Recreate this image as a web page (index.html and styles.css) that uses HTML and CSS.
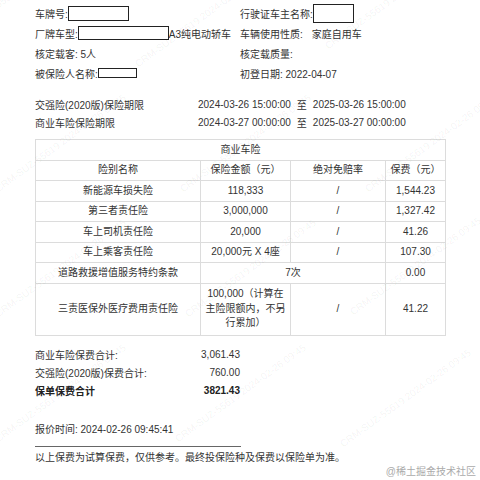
FILE: index.html
```html
<!DOCTYPE html>
<html lang="zh">
<head>
<meta charset="utf-8">
<link rel="stylesheet" href="styles.css">
</head>
<body>
<div class="page">
  <div class="info">
    <div class="cell">车牌号:<span class="mask m1"></span></div>
    <div class="cell">行驶证车主名称:<span class="mask m4"></span></div>
    <div class="cell">厂牌车型:<span class="mask m2"></span>A3纯电动轿车</div>
    <div class="cell">车辆使用性质:<span class="val">家庭自用车</span></div>
    <div class="cell">核定载客: 5人</div>
    <div class="cell">核定载质量:</div>
    <div class="cell">被保险人名称:<span class="mask m3"></span></div>
    <div class="cell">初登日期: 2022-04-07</div>
  </div>

  <div class="periods">
    <div class="period"><span class="plabel">交强险(2020版)保险期限</span><span>2024-03-26 15:00:00</span><span class="to">至</span><span>2025-03-26 15:00:00</span></div>
    <div class="period"><span class="plabel">商业车险保险期限</span><span>2024-03-27 00:00:00</span><span class="to">至</span><span>2025-03-27 00:00:00</span></div>
  </div>

  <table class="cover">
    <colgroup><col class="c1"><col class="c2"><col class="c3"><col class="c4"></colgroup>
    <tr><td colspan="4">商业车险</td></tr>
    <tr><td>险别名称</td><td>保险金额（元）</td><td>绝对免赔率</td><td>保费（元）</td></tr>
    <tr><td>新能源车损失险</td><td>118,333</td><td>/</td><td>1,544.23</td></tr>
    <tr><td>第三者责任险</td><td>3,000,000</td><td>/</td><td>1,327.42</td></tr>
    <tr><td>车上司机责任险</td><td>20,000</td><td>/</td><td>41.26</td></tr>
    <tr><td>车上乘客责任险</td><td>20,000元 X 4座</td><td>/</td><td>107.30</td></tr>
    <tr><td>道路救援增值服务特约条款</td><td colspan="2">7次</td><td>0.00</td></tr>
    <tr class="tall"><td>三责医保外医疗费用责任险</td><td class="multi">100,000（计算在<br>主险限额内，不另<br>行累加）</td><td>/</td><td>41.22</td></tr>
  </table>

  <div class="totals">
    <div class="trow"><span>商业车险保费合计:</span><span>3,061.43</span></div>
    <div class="trow"><span>交强险(2020版)保费合计:</span><span>760.00</span></div>
    <div class="trow bold"><span>保单保费合计</span><span>3821.43</span></div>
  </div>

  <div class="quote">报价时间: 2024-02-26 09:45:41</div>
  <div class="rule"></div>
  <div class="note">以上保费为试算保费，仅供参考。最终投保险种及保费以保险单为准。</div>
  <div class="brand">@稀土掘金技术社区</div>
</div>

<div class="wm">
  <span class="w" style="left:-40px;top:28px">CRM-SUZ-55619 2024-02-26 09:45</span>
  <span class="w" style="left:140px;top:58px">CRM-SUZ-55619 2024-02-26 09:45</span>
  <span class="w" style="left:330px;top:40px">CRM-SUZ-55619 2024-02-26 09:45</span>
  <span class="w" style="left:0px;top:183px">CRM-SUZ-55619 2024-02-26 09:45</span>
  <span class="w" style="left:185px;top:183px">CRM-SUZ-55619 2024-02-26 09:45</span>
  <span class="w" style="left:370px;top:183px">CRM-SUZ-55619 2024-02-26 09:45</span>
  <span class="w" style="left:0px;top:308px">CRM-SUZ-55619 2024-02-26 09:45</span>
  <span class="w" style="left:190px;top:308px">CRM-SUZ-55619 2024-02-26 09:45</span>
  <span class="w" style="left:355px;top:306px">CRM-SUZ-55619 2024-02-26 09:45</span>
  <span class="w" style="left:0px;top:433px">CRM-SUZ-55619 2024-02-26 09:45</span>
  <span class="w" style="left:180px;top:433px">CRM-SUZ-55619 2024-02-26 09:45</span>
  <span class="w" style="left:345px;top:438px">CRM-SUZ-55619 2024-02-26 09:45</span>
</div>
</body>
</html>
```

FILE: styles.css
```css
html, body {
  margin: 0;
  padding: 0;
  background: #fff;
}
body {
  width: 480px;
  height: 480px;
  position: relative;
  overflow: hidden;
  font-family: "Liberation Sans", "Noto Sans CJK SC", sans-serif;
  font-size: 10px;
  color: #333;
}
.page {
  padding: 3px 0 0 35px;
}
.info {
  display: grid;
  grid-template-columns: 205px 1fr;
  grid-auto-rows: 20px;
}
.cell {
  display: flex;
  align-items: center;
  white-space: nowrap;
}
.mask {
  display: inline-block;
  box-sizing: border-box;
  border: 1px solid #222;
  background: #fff;
}
.m1 { width: 61px; height: 15px; }
.m2 { width: 91px; height: 14px; }
.m3 { width: 39px; height: 10px; }
.m4 { width: 41px; height: 19px; }
.val { margin-left: 9px; }

.periods {
  margin-top: 12px;
}
.period {
  display: flex;
  align-items: center;
  height: 18px;
  white-space: nowrap;
}
.plabel {
  width: 163px;
}
.to {
  margin: 0 6px 0 6px;
}

.cover {
  margin-top: 8px;
  width: 410px;
  border-collapse: collapse;
  table-layout: fixed;
}
.c1 { width: 165px; }
.c2 { width: 90px; }
.c3 { width: 95px; }
.c4 { width: 60px; }
.cover td {
  border: 1px solid #dcdcdc;
  text-align: center;
  height: 19.5px;
  padding: 0;
  line-height: 12px;
}
.cover .tall td {
  height: 47px;
}
.cover .multi {
  line-height: 14.5px;
  padding: 2px 0;
}

.totals {
  margin-top: 10px;
  width: 205px;
}
.trow {
  display: flex;
  justify-content: space-between;
  align-items: center;
  height: 18px;
}
.bold {
  font-weight: bold;
  color: #222;
}
.quote {
  margin-top: 21px;
  height: 18px;
  line-height: 18px;
}
.rule {
  margin-top: 7px;
  width: 206px;
  height: 1px;
  background: #666;
}
.note {
  margin-top: 3px;
  height: 16px;
  line-height: 16px;
}
.brand {
  text-align: right;
  padding-right: 4px;
  color: #aaa;
  font-size: 10px;
  line-height: 12px;
}

.wm {
  position: absolute;
  left: 0;
  top: 0;
  width: 480px;
  height: 480px;
  overflow: hidden;
  pointer-events: none;
}
.w {
  position: absolute;
  white-space: nowrap;
  font-size: 10px;
  line-height: 12px;
  color: rgba(0, 0, 0, 0.06);
  transform: rotate(-36deg);
  transform-origin: 0 100%;
}
```
